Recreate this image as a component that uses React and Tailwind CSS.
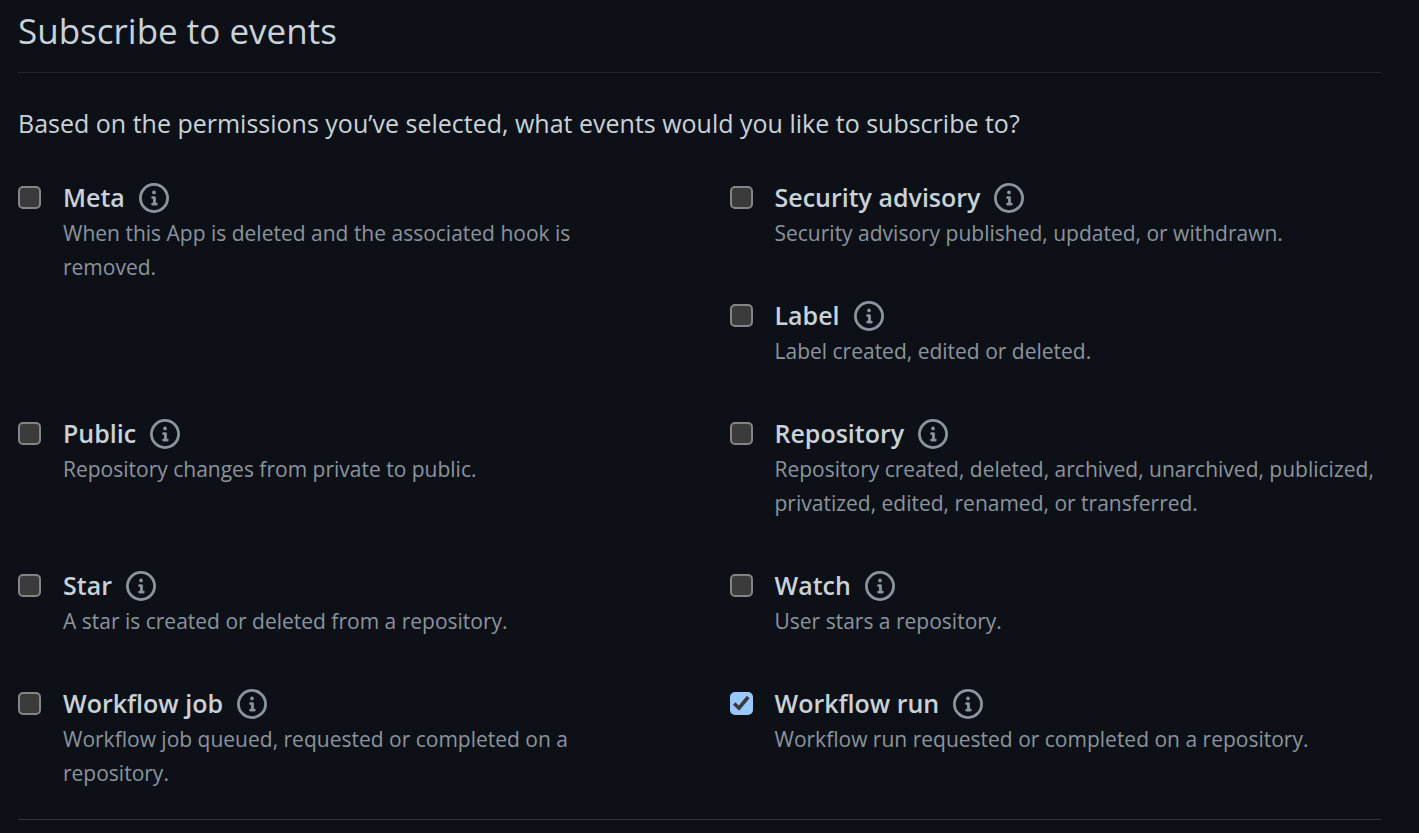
const events = [
  { id: "meta", name: "Meta", text: "When this App is deleted and the associated hook is removed.", tall: true },
  { id: "security", name: "Security advisory", text: "Security advisory published, updated, or withdrawn." },
  { id: "label", name: "Label", text: "Label created, edited or deleted." },
  { id: "public", name: "Public", text: "Repository changes from private to public." },
  { id: "repository", name: "Repository", text: "Repository created, deleted, archived, unarchived, publicized, privatized, edited, renamed, or transferred." },
  { id: "star", name: "Star", text: "A star is created or deleted from a repository." },
  { id: "watch", name: "Watch", text: "User stars a repository." },
  { id: "workflow-job", name: "Workflow job", text: "Workflow job queued, requested or completed on a repository." },
  { id: "workflow-run", name: "Workflow run", text: "Workflow run requested or completed on a repository.", checked: true },
];

function InfoIcon() {
  return (
    <svg viewBox="0 0 16 16" className="size-[30px] fill-current" aria-hidden="true">
      <path d="M0 8a8 8 0 1 1 16 0A8 8 0 0 1 0 8Zm8-6.5a6.5 6.5 0 1 0 0 13 6.5 6.5 0 0 0 0-13ZM6.5 7.75A.75.75 0 0 1 7.25 7h1a.75.75 0 0 1 .75.75v2.75h.25a.75.75 0 0 1 0 1.5h-2a.75.75 0 0 1 0-1.5h.25v-2h-.25a.75.75 0 0 1-.75-.75ZM8 6a1 1 0 1 1 0-2 1 1 0 0 1 0 2Z" />
    </svg>
  );
}

function Event({ id, name, text, checked, tall }) {
  return (
    <li className={`flex items-start gap-[22px] ${tall ? "row-span-2" : ""}`}>
      <span className="mt-[5px] grid shrink-0">
        <input
          id={id}
          type="checkbox"
          defaultChecked={checked}
          aria-describedby={`${id}-text`}
          className="peer col-start-1 row-start-1 size-[23px] appearance-none rounded-[5px] border-2 border-[#858585] bg-[#3b3b3b] checked:border-[#99c8ff] checked:bg-[#99c8ff]"
        />
        <svg
          viewBox="0 0 23 23"
          className="pointer-events-none invisible col-start-1 row-start-1 size-[23px] peer-checked:visible"
          fill="none"
          stroke="#3b3b3b"
          strokeWidth="3.6"
          aria-hidden="true"
        >
          <path d="M4.2 11.5 9 16.2 18.2 5" />
        </svg>
      </span>
      <div className="min-w-0">
        <div className="flex h-[34px] items-center gap-[14px]">
          <label htmlFor={id} className="pb-[2px] text-[25px] leading-[34px] font-semibold text-[#c9d1d9]">{name}</label>
          <button type="button" aria-label={`About ${name}`} className="text-[#8b949e]">
            <InfoIcon />
          </button>
        </div>
        <p id={`${id}-text`} className="max-w-[602px] pt-px text-[21px] leading-[34px] text-[#8b949e]">{text}</p>
      </div>
    </li>
  );
}

export default function App() {
  return (
    <main className="min-h-screen bg-[#0d1117] pt-[7px] pr-[38px] pl-[18px] font-['Open_Sans','Noto_Sans',sans-serif] text-[#c9d1d9]">
      <h2 className="border-b border-[#21262d] pb-[17px] text-[35px] leading-[48px]">Subscribe to events</h2>
      <p className="pt-[31px] text-[25px] leading-[38px]">
        Based on the permissions you’ve selected, what events would you like to subscribe to?
      </p>
      <ul className="mt-[39px] grid grid-cols-2 gap-x-[60px] gap-y-[49px] border-b border-[#30363d] pb-[29px]">
        {events.map((event) => (
          <Event key={event.id} {...event} />
        ))}
      </ul>
    </main>
  );
}
